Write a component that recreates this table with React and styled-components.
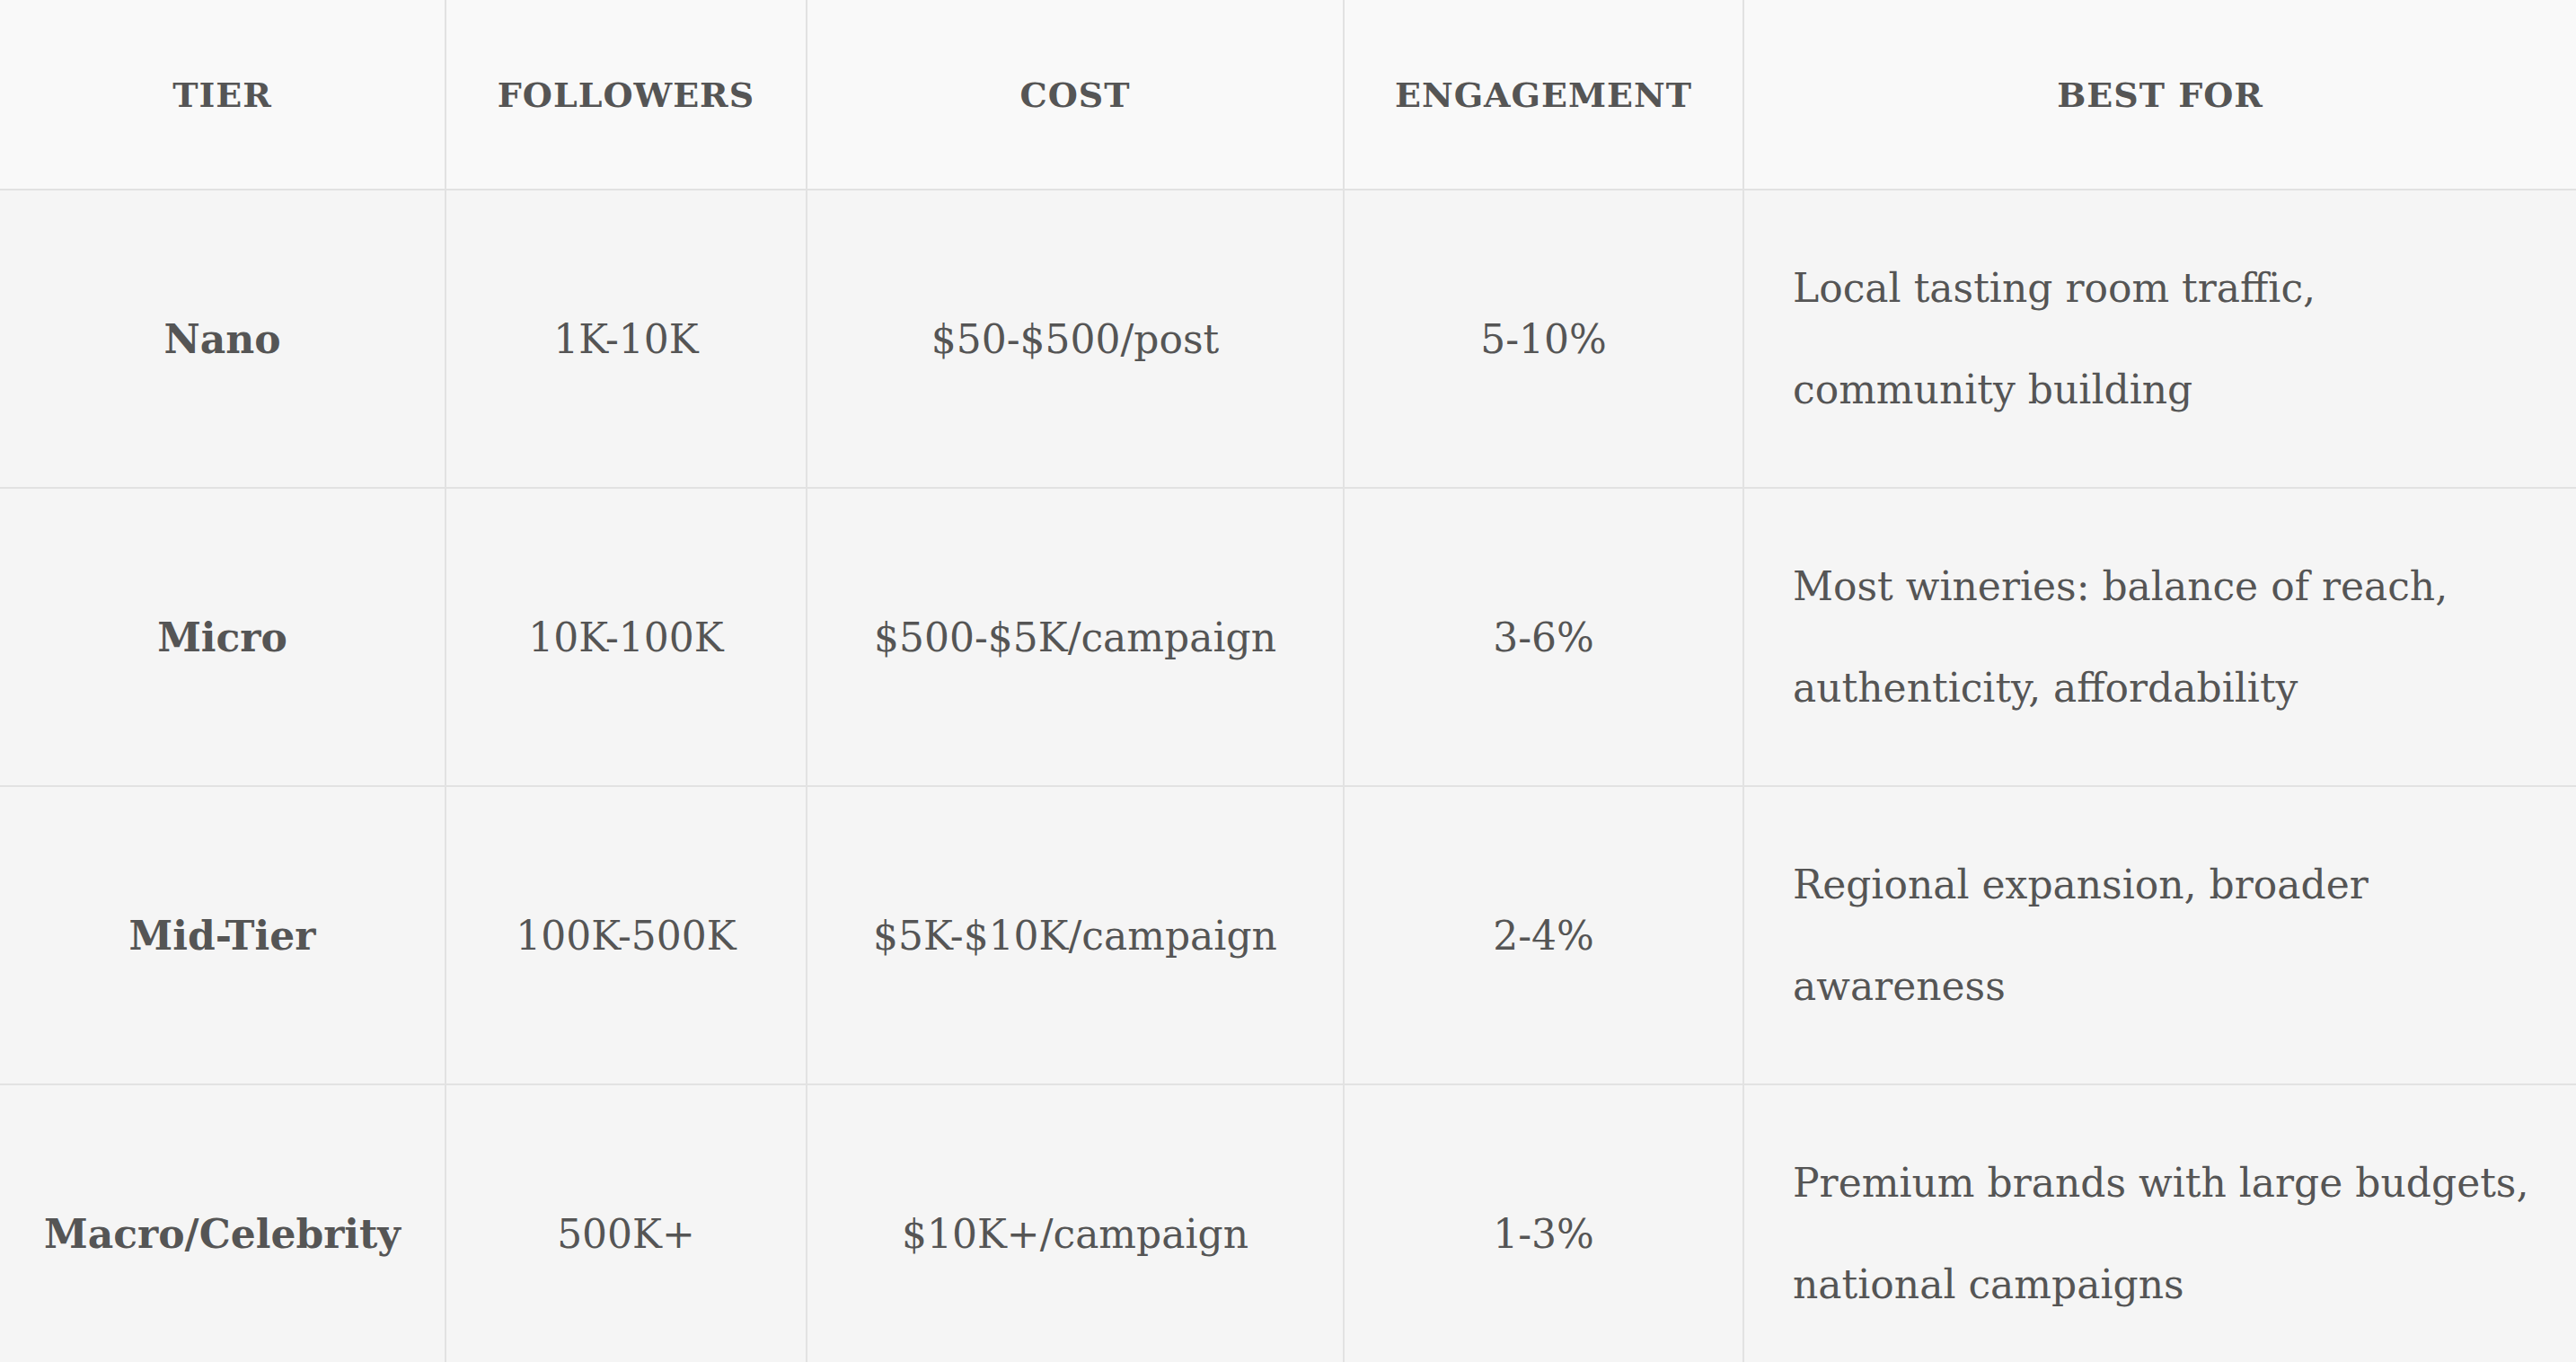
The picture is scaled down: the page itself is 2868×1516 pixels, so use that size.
import styled, { createGlobalStyle } from "styled-components"

const Global = createGlobalStyle`
  html, body {
    margin: 0;
    padding: 0;
    background: #f5f5f5;
    overflow: hidden;
  }
`

const Table = styled.table`
  width: 2868px;
  border-collapse: collapse;
  table-layout: fixed;
  font-family: "DejaVu Serif", "Liberation Serif", serif;
  color: #555;
`

const HeadCell = styled.th`
  height: 210px;
  padding: 0 20px;
  background: #f9f9f9;
  border: 2px solid #e2e2e2;
  border-top: none;
  font-size: 38px;
  font-weight: 700;
  letter-spacing: 1px;
  text-transform: uppercase;
  text-align: center;
  vertical-align: middle;
  &:first-child { border-left: none; }
  &:last-child { border-right: none; }
`

const Cell = styled.td`
  height: 226px;
  padding: ${p => (p.$left ? "52px 36px 52px 54px" : "52px 20px")};
  background: #f5f5f5;
  border: 2px solid #e2e2e2;
  font-size: 44px;
  line-height: 113px;
  font-weight: ${p => (p.$strong ? 700 : 400)};
  text-align: ${p => (p.$left ? "left" : "center")};
  vertical-align: middle;
  &:first-child { border-left: none; }
  &:last-child { border-right: none; }
`

const widths = [496, 402, 598, 445, 927]

const rows = [
  ["Nano", "1K-10K", "$50-$500/post", "5-10%", "Local tasting room traffic, community building"],
  ["Micro", "10K-100K", "$500-$5K/campaign", "3-6%", "Most wineries: balance of reach, authenticity, affordability"],
  ["Mid-Tier", "100K-500K", "$5K-$10K/campaign", "2-4%", "Regional expansion, broader awareness"],
  ["Macro/Celebrity", "500K+", "$10K+/campaign", "1-3%", "Premium brands with large budgets, national campaigns"],
]

export default function App() {
  return (
    <>
      <Global />
      <Table>
        <colgroup>
          {widths.map((w, i) => <col key={i} style={{ width: w }} />)}
        </colgroup>
        <thead>
          <tr>
            <HeadCell>Tier</HeadCell>
            <HeadCell>Followers</HeadCell>
            <HeadCell>Cost</HeadCell>
            <HeadCell>Engagement</HeadCell>
            <HeadCell>Best For</HeadCell>
          </tr>
        </thead>
        <tbody>
          {rows.map(r => (
            <tr key={r[0]}>
              <Cell $strong>{r[0]}</Cell>
              <Cell>{r[1]}</Cell>
              <Cell>{r[2]}</Cell>
              <Cell>{r[3]}</Cell>
              <Cell $left>{r[4]}</Cell>
            </tr>
          ))}
        </tbody>
      </Table>
    </>
  )
}
